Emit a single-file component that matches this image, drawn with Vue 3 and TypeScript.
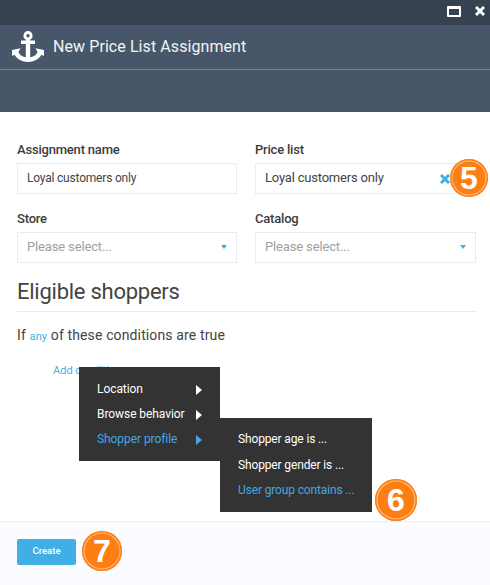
<script setup lang="ts">
const menu = [
  { label: 'Location', active: false },
  { label: 'Browse behavior', active: false },
  { label: 'Shopper profile', active: true },
]
const sub = [
  { label: 'Shopper age is ...', active: false },
  { label: 'Shopper gender is ...', active: false },
  { label: 'User group contains ...', active: true },
]
</script>

<template>
  <div class="page">
    <div class="topbar">
      <svg class="win-icon" width="14" height="11" viewBox="0 0 14 11">
        <path fill="#fff" fill-rule="evenodd" d="M1 0h12a1 1 0 0 1 1 1v9a1 1 0 0 1-1 1H1a1 1 0 0 1-1-1V1a1 1 0 0 1 1-1zM2 3v6h10V3z" />
      </svg>
      <svg class="win-icon" width="10" height="10" viewBox="0 0 10 10">
        <path stroke="#fff" stroke-width="3" d="M1 1l8 8M9 1l-8 8" />
      </svg>
    </div>
    <header class="header">
      <div class="title-row">
        <svg class="anchor" width="32" height="31" viewBox="0 0 32 31">
          <path fill="#fff" fill-rule="evenodd" d="M16 0a4.600 4.600 0 0 1 2.200 8.600V9.500H23V13H18.200V26.200C21 25.800 24 24.200 25.600 21.200L23.500 17.200 32 19V25L29.500 23.800C27 28 22 31 16 31S5 28 2.500 23.800L0 25V19L8.500 17.200 6.400 21.200C8 24.200 11 25.800 13.800 26.200V13H9V9.500H13.800V8.600A4.600 4.600 0 0 1 16 0zM16 3a1.700 1.700 0 1 0 0 3.400 1.700 1.700 0 0 0 0-3.400z" />
        </svg>
        <h1 class="title">New Price List Assignment</h1>
      </div>
    </header>

    <main class="body">
      <div class="grid">
        <div class="field">
          <label class="label">Assignment name</label>
          <div class="input small">Loyal customers only</div>
        </div>
        <div class="field">
          <label class="label">Price list</label>
          <div class="input big">
            Loyal customers only
            <svg class="clear" width="10" height="10" viewBox="0 0 10 10">
              <path stroke="#3fb0e6" stroke-width="3" d="M1 1l8 8M9 1l-8 8" />
            </svg>
          </div>
        </div>
        <div class="field">
          <label class="label">Store</label>
          <div class="input placeholder">Please select...<i class="caret"></i></div>
        </div>
        <div class="field">
          <label class="label">Catalog</label>
          <div class="input placeholder">Please select...<i class="caret"></i></div>
        </div>
      </div>

      <h2 class="heading">Eligible shoppers</h2>
      <p class="cond">If <a class="any">any</a> of these conditions are true</p>
      <a class="add">Add condition</a>
    </main>

    <footer class="footer">
      <button class="create">Create</button>
    </footer>

    <ul class="menu">
      <li v-for="m in menu" :key="m.label" :class="{ active: m.active }">
        {{ m.label }}<i class="arrow"></i>
      </li>
    </ul>
    <ul class="menu submenu">
      <li v-for="s in sub" :key="s.label" :class="{ active: s.active }">{{ s.label }}</li>
    </ul>

    <span class="badge b5">5</span>
    <span class="badge b6">6</span>
    <span class="badge b7">7</span>
  </div>
</template>

<style>
html, body { margin: 0; background: #fff; }
</style>

<style scoped>
.page {
  position: relative;
  width: 490px;
  height: 585px;
  overflow: hidden;
  display: flex;
  flex-direction: column;
  font-family: Roboto, "Liberation Sans", sans-serif;
  color: #444;
  background: #fff;
}
.topbar {
  height: 25px;
  flex: none;
  background: #36424f;
  display: flex;
  justify-content: flex-end;
  align-items: center;
  gap: 14px;
  padding: 0 5px 3px 0;
  box-sizing: border-box;
}
.header {
  height: 87px;
  flex: none;
  background: #475769;
  box-sizing: border-box;
}
.title-row {
  height: 45px;
  box-sizing: border-box;
  border-bottom: 1px solid #76838f;
  display: flex;
  align-items: center;
  padding: 0 0 2px 12px;
  gap: 9px;
}
.anchor { flex: none; }
.title {
  margin: 0;
  font-size: 16px;
  font-weight: 400;
  letter-spacing: 0.08px;
  color: #f2f4f6;
}
.body {
  flex: 1;
  padding: 30px 14px 0 17px;
}
.grid {
  display: grid;
  grid-template-columns: 220px 221px;
  column-gap: 18px;
  row-gap: 17px;
}
.label {
  display: block;
  font-size: 13px;
  font-weight: 500;
  line-height: 16px;
  margin-bottom: 5px;
  letter-spacing: -0.2px;
  color: #3c3c3c;
}
.input {
  position: relative;
  height: 31px;
  box-sizing: border-box;
  border: 1px solid #e9ebf2;
  padding: 0 9px;
  line-height: 28px;
  font-size: 13px;
  color: #444;
}
.input.small { font-size: 12px; letter-spacing: -0.2px; line-height: 29px; }
.input.big { letter-spacing: -0.2px; }
.placeholder { color: #a0a0a0; letter-spacing: -0.15px; }
.clear {
  position: absolute;
  right: 25px;
  top: 10px;
}
.caret {
  position: absolute;
  right: 9px;
  top: 12px;
  border-left: 3px solid transparent;
  border-right: 3px solid transparent;
  border-top: 4px solid #3fb0e6;
}
.heading {
  margin: 15px 0 0;
  padding-bottom: 5px;
  border-bottom: 1px solid #e9ebf0;
  font-size: 22px;
  font-weight: 400;
  line-height: 28px;
  letter-spacing: -0.25px;
  color: #444;
}
.cond {
  margin: 14px 0 0;
  font-size: 14px;
  line-height: 18px;
  letter-spacing: 0.13px;
}
.any { font-size: 11px; color: #3fb0e6; }
.add {
  display: block;
  margin: 18px 0 0 36px;
  font-size: 11px;
  line-height: 14px;
  color: #3fb0e6;
}
.footer {
  height: 64px;
  flex: none;
  box-sizing: border-box;
  border-top: 1px solid #e9ebf2;
  background: #fbfcff;
  padding: 17px;
}
.create {
  display: block;
  width: 59px;
  height: 26px;
  border: 0;
  border-radius: 2px;
  background: #41afe5;
  color: #fff;
  font: 500 9.5px Roboto, sans-serif;
  padding: 0 0 4px;
}
.menu {
  position: absolute;
  left: 79px;
  top: 367px;
  width: 141px;
  height: 94px;
  margin: 0;
  padding: 10px 0 0 18px;
  box-sizing: border-box;
  list-style: none;
  background: #333;
  color: #fff;
  font-size: 12px;
  letter-spacing: -0.07px;
}
.menu li {
  position: relative;
  height: 25px;
  line-height: 25px;
}
.menu li.active { color: #42a8e6; }
.arrow {
  position: absolute;
  left: 99px;
  top: 8px;
  border-top: 5px solid transparent;
  border-bottom: 5px solid transparent;
  border-left: 6px solid currentColor;
}
.submenu {
  left: 220px;
  top: 418px;
  width: 152px;
  padding-left: 18px;
  padding-top: 9px;
  height: 94px;
  font-size: 12px;
  letter-spacing: -0.14px;
}
.submenu li { height: 25.5px; }
.badge {
  position: absolute;
  width: 42px;
  height: 42px;
  box-sizing: border-box;
  border-radius: 50%;
  background: #fd7f14;
  box-shadow: inset 0 0 0 1.5px #fd7f14, inset 0 0 0 2.5px #fdc090;
  color: #fff;
  font: 700 32px/42px "Liberation Sans", sans-serif;
  text-align: center;
}
.b5 { left: 450px; top: 159px; width: 38px; height: 38px; line-height: 38px; }
.b6 { left: 375px; top: 479px; }
.b7 { left: 82px; top: 531px; width: 40px; height: 40px; line-height: 40px; }
</style>
